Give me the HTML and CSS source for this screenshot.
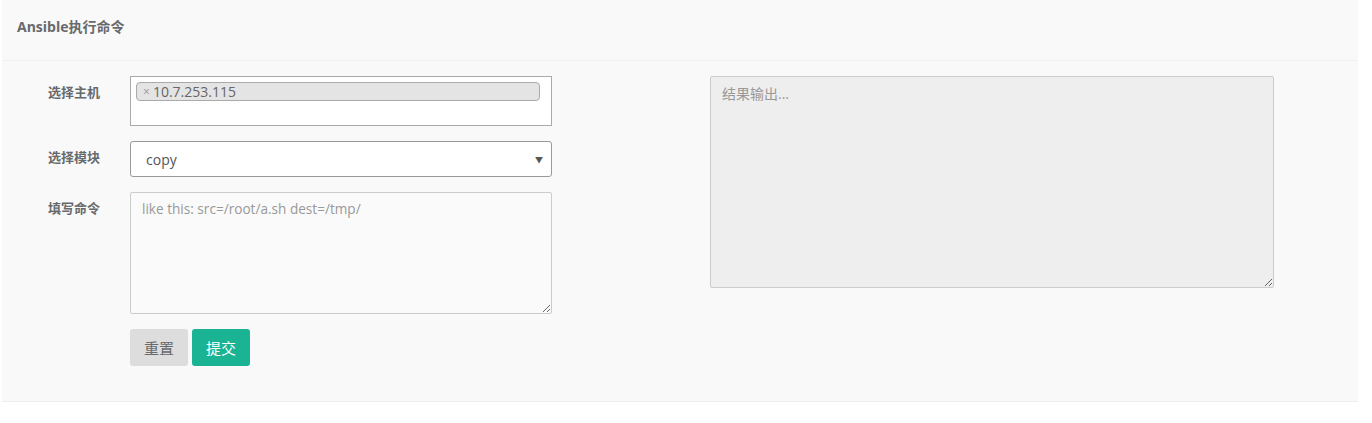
FILE: index.html
```html
<!DOCTYPE html>
<html lang="zh">
<head>
<meta charset="utf-8">
<title>Ansible执行命令</title>
<link rel="stylesheet" href="styles.css">
</head>
<body>
<div class="panel">
  <div class="panel-title"><h5>Ansible执行命令</h5></div>
  <div class="panel-body">
    <form class="cmd-form">
      <label class="label">选择主机</label>
      <div class="multi">
        <span class="tag"><span class="tag-x">×</span>10.7.253.115</span>
      </div>
      <label class="label">选择模块</label>
      <div class="select"><span>copy</span><span class="arrow">▼</span></div>
      <label class="label">填写命令</label>
      <textarea class="cmd" placeholder="like this: src=/root/a.sh dest=/tmp/"></textarea>
      <span></span>
      <div class="buttons">
        <button type="button" class="btn btn-reset">重置</button>
        <button type="button" class="btn btn-submit">提交</button>
      </div>
    </form>
    <textarea class="output" placeholder="结果输出..."></textarea>
  </div>
</div>
</body>
</html>
```

FILE: styles.css
```css
html, body {
  margin: 0;
  padding: 0;
  background: #ffffff;
}
body {
  font-family: "Open Sans", "Noto Sans CJK SC", sans-serif;
  font-size: 13px;
  color: #676a6c;
}
.panel {
  margin-left: 2px;
  width: 1356px;
  height: 402px;
  background: #f9f9f9;
  box-sizing: border-box;
  border-bottom: 1px solid #eeeeee;
}
.panel-title {
  height: 60px;
  border-bottom: 1px solid #f0f0f0;
  box-sizing: content-box;
  padding: 18px 0 0 15px;
  box-sizing: border-box;
  height: 61px;
}
.panel-title h5 {
  margin: 0;
  font-size: 14px;
  line-height: 18px;
  font-weight: 700;
  color: #676a6c;
}
.panel-body {
  display: flex;
  align-items: flex-start;
  padding: 15px 0 0 46px;
}
.cmd-form {
  display: grid;
  grid-template-columns: 82px 422px;
  row-gap: 15px;
  margin: 0;
}
.label {
  font-weight: 700;
  font-size: 13px;
  line-height: 18px;
  padding-top: 7px;
  color: #676a6c;
}
.multi {
  height: 50px;
  box-sizing: border-box;
  border: 1px solid #aaaaaa;
  background: #ffffff;
  padding: 5px 11px 0 5px;
}
.tag {
  display: flex;
  align-items: center;
  height: 19px;
  box-sizing: border-box;
  border: 1px solid #aaaaaa;
  border-radius: 4px;
  background: #e4e4e4;
  padding: 0 6px;
  font-size: 14px;
  color: #666666;
}
.tag-x {
  color: #999999;
  font-size: 12px;
  margin-right: 3px;
}
.select {
  height: 36px;
  box-sizing: border-box;
  border: 1px solid #999999;
  border-radius: 3px;
  background: #ffffff;
  display: flex;
  align-items: center;
  justify-content: space-between;
  padding: 0 8px 0 15px;
  font-size: 14px;
  color: #555555;
}
.arrow {
  font-size: 8px;
  color: #555555;
}
textarea {
  font-family: "Open Sans", "Noto Sans CJK SC", sans-serif;
  font-size: 14px;
  box-sizing: border-box;
  margin: 0;
  border: 1px solid #cccccc;
  border-radius: 2px;
  color: #555555;
  outline: none;
}
textarea::placeholder {
  color: #999999;
}
.cmd {
  height: 122px;
  padding: 6px 11px;
  background: #fafafa;
  font-size: 13.6px;
}
.buttons {
  display: flex;
  gap: 4px;
}
.btn {
  width: 58px;
  height: 37px;
  border: none;
  border-radius: 3px;
  font-family: "Open Sans", "Noto Sans CJK SC", sans-serif;
  font-size: 15px;
  padding: 0;
  cursor: pointer;
}
.btn-reset {
  background: #dddddd;
  color: #676a6c;
}
.btn-submit {
  background: #1ab394;
  color: #ffffff;
}
.output {
  margin-left: 158px;
  width: 564px;
  height: 212px;
  padding: 6px 11px;
  background: #eeeeee;
  resize: vertical;
}
```
